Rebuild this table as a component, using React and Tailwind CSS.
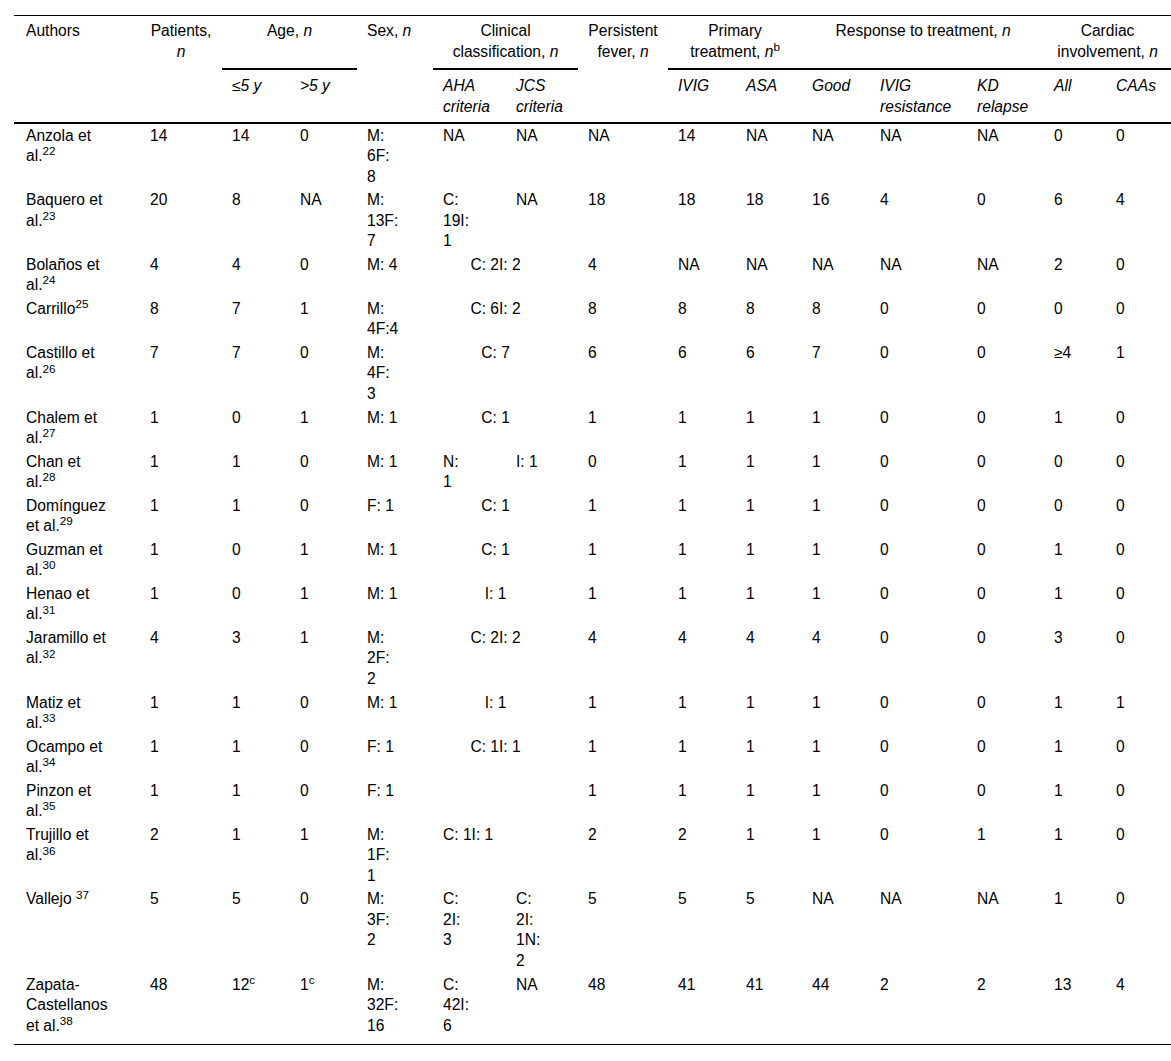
import React from "react";

const cols = [126, 82, 68, 67, 76, 73, 72, 90, 68, 66, 68, 97, 77, 62, 65];

const S = (t) => <sup>{t}</sup>;
const C2 = (v, center = true) => ({ span: 2, center, v });

const rows = [
  [["Anzola et", <>al.{S("22")}</>], "14", "14", "0", ["M:", "6F:", "8"], "NA", "NA", "NA", "14", "NA", "NA", "NA", "NA", "0", "0"],
  [["Baquero et", <>al.{S("23")}</>], "20", "8", "NA", ["M:", "13F:", "7"], ["C:", "19I:", "1"], "NA", "18", "18", "18", "16", "4", "0", "6", "4"],
  [["Bolaños et", <>al.{S("24")}</>], "4", "4", "0", "M: 4", C2("C: 2I: 2"), "4", "NA", "NA", "NA", "NA", "NA", "2", "0"],
  [[<>Carrillo{S("25")}</>], "8", "7", "1", ["M:", "4F:4"], C2("C: 6I: 2"), "8", "8", "8", "8", "0", "0", "0", "0"],
  [["Castillo et", <>al.{S("26")}</>], "7", "7", "0", ["M:", "4F:", "3"], C2("C: 7"), "6", "6", "6", "7", "0", "0", "≥4", "1"],
  [["Chalem et", <>al.{S("27")}</>], "1", "0", "1", "M: 1", C2("C: 1"), "1", "1", "1", "1", "0", "0", "1", "0"],
  [["Chan et", <>al.{S("28")}</>], "1", "1", "0", "M: 1", ["N:", "1"], "I: 1", "0", "1", "1", "1", "0", "0", "0", "0"],
  [["Domínguez", <>et al.{S("29")}</>], "1", "1", "0", "F: 1", C2("C: 1"), "1", "1", "1", "1", "0", "0", "0", "0"],
  [["Guzman et", <>al.{S("30")}</>], "1", "0", "1", "M: 1", C2("C: 1"), "1", "1", "1", "1", "0", "0", "1", "0"],
  [["Henao et", <>al.{S("31")}</>], "1", "0", "1", "M: 1", C2("I: 1"), "1", "1", "1", "1", "0", "0", "1", "0"],
  [["Jaramillo et", <>al.{S("32")}</>], "4", "3", "1", ["M:", "2F:", "2"], C2("C: 2I: 2"), "4", "4", "4", "4", "0", "0", "3", "0"],
  [["Matiz et", <>al.{S("33")}</>], "1", "1", "0", "M: 1", C2("I: 1"), "1", "1", "1", "1", "0", "0", "1", "1"],
  [["Ocampo et", <>al.{S("34")}</>], "1", "1", "0", "F: 1", C2("C: 1I: 1"), "1", "1", "1", "1", "0", "0", "1", "0"],
  [["Pinzon et", <>al.{S("35")}</>], "1", "1", "0", "F: 1", C2(""), "1", "1", "1", "1", "0", "0", "1", "0"],
  [["Trujillo et", <>al.{S("36")}</>], "2", "1", "1", ["M:", "1F:", "1"], C2("C: 1I: 1", false), "2", "2", "1", "1", "0", "1", "1", "0"],
  [[<>Vallejo {S("37")}</>], "5", "5", "0", ["M:", "3F:", "2"], ["C:", "2I:", "3"], ["C:", "2I:", "1N:", "2"], "5", "5", "5", "NA", "NA", "NA", "1", "0"],
  [["Zapata-", "Castellanos", <>et al.{S("38")}</>], "48", <>12{S("c")}</>, <>1{S("c")}</>, ["M:", "32F:", "16"], ["C:", "42I:", "6"], "NA", "48", "41", "41", "44", "2", "2", "13", "4"],
];

function Lines({ v }) {
  if (Array.isArray(v)) {
    return v.map((l, i) => (
      <React.Fragment key={i}>
        {i > 0 && <br />}
        {l}
      </React.Fragment>
    ));
  }
  return v;
}

const th1 = "border-t border-black pt-[5px] pb-[6px] px-[10px] align-top font-normal";
const grp = "border-b-2";
const th2 = "pt-[6px] pb-[5px] pl-[10px] pr-[4px] align-top font-normal italic text-left border-b-2 border-black";

export default function App() {
  const last = rows.length - 1;
  return (
    <div className="bg-white min-h-[1061px] w-[1171px] overflow-hidden pt-[15px] pl-[14px] text-black text-[15.6px] leading-[20.5px] font-['Liberation_Sans',Arial,sans-serif]">
      <table className="table-fixed border-separate border-spacing-0 w-[1157px]">
        <colgroup>
          {cols.map((w, i) => (
            <col key={i} style={{ width: w }} />
          ))}
        </colgroup>
        <thead>
          <tr>
            <th rowSpan={2} className={`${th1} !pl-[12px] text-left border-b-2 border-black`}>Authors</th>
            <th rowSpan={2} className={`${th1} text-center border-b-2 border-black`}>
              Patients,<br /><i>n</i>
            </th>
            <th colSpan={2} className={`${th1} ${grp} text-center border-black`}>
              Age, <i>n</i>
            </th>
            <th rowSpan={2} className={`${th1} text-left border-b-2 border-black`}>
              Sex, <i>n</i>
            </th>
            <th colSpan={2} className={`${th1} ${grp} text-center border-black`}>
              Clinical<br />classification, <i>n</i>
            </th>
            <th rowSpan={2} className={`${th1} text-center border-b-2 border-black`}>
              Persistent<br />fever, <i>n</i>
            </th>
            <th colSpan={2} className={`${th1} ${grp} text-center border-black`}>
              Primary<br />treatment, <i>n</i><sup>b</sup>
            </th>
            <th colSpan={3} className={`${th1} ${grp} text-center border-black`}>
              Response to treatment, <i>n</i>
            </th>
            <th colSpan={2} className={`${th1} ${grp} text-center border-black`}>
              Cardiac<br />involvement, <i>n</i>
            </th>
          </tr>
          <tr>
            <th className={th2}>≤5 y</th>
            <th className={th2}>&gt;5 y</th>
            <th className={th2}>AHA<br />criteria</th>
            <th className={th2}>JCS<br />criteria</th>
            <th className={th2}>IVIG</th>
            <th className={th2}>ASA</th>
            <th className={th2}>Good</th>
            <th className={th2}>IVIG<br />resistance</th>
            <th className={th2}>KD<br />relapse</th>
            <th className={th2}>All</th>
            <th className={th2}>CAAs</th>
          </tr>
        </thead>
        <tbody>
          {rows.map((r, ri) => {
            const isLast = ri === last;
            const base =
              "align-top whitespace-nowrap pt-[1.55px] " +
              (isLast ? "pb-[8px] border-b border-black" : "pb-[1.55px]");
            return (
              <tr key={ri}>
                {r.map((c, ci) => {
                  if (c && typeof c === "object" && !Array.isArray(c) && c.span) {
                    return (
                      <td
                        key={ci}
                        colSpan={c.span}
                        className={`${base} pl-[10px] pr-[30px] ${c.center ? "text-center" : "text-left"}`}
                      >
                        {c.v}
                      </td>
                    );
                  }
                  return (
                    <td
                      key={ci}
                      className={`${base} ${ci === 0 ? "pl-[12px]" : "pl-[10px]"} pr-[4px] text-left`}
                    >
                      <Lines v={c} />
                    </td>
                  );
                })}
              </tr>
            );
          })}
        </tbody>
      </table>
    </div>
  );
}
